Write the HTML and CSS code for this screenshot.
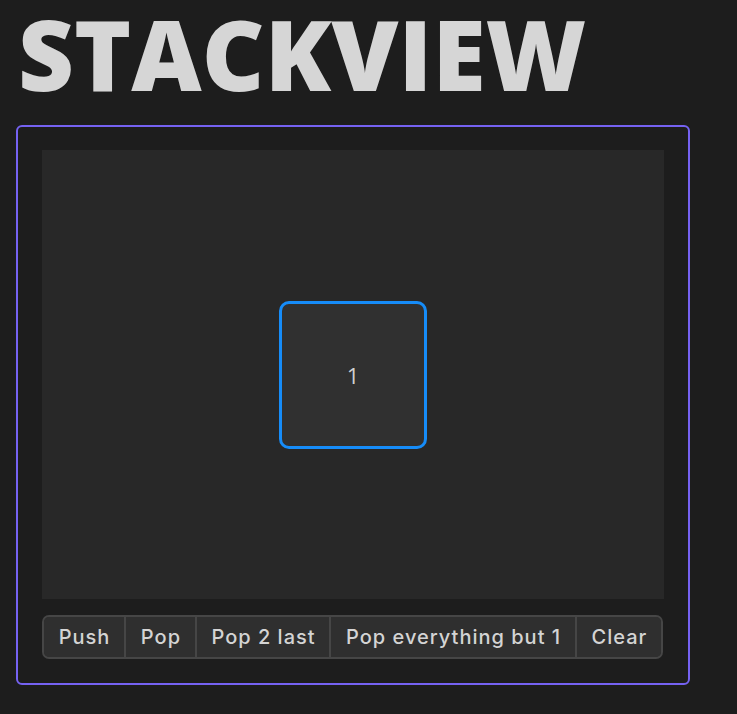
FILE: index.html
```html
<!DOCTYPE html>
<html>
<head>
<meta charset="utf-8">
<link rel="stylesheet" href="styles.css">
</head>
<body>
<h1 class="title">STACKVIEW</h1>
<div class="card">
  <div class="stage">
    <div class="item">1</div>
  </div>
  <div class="btn-group">
    <button class="btn">Push</button>
    <button class="btn">Pop</button>
    <button class="btn">Pop 2 last</button>
    <button class="btn">Pop everything but 1</button>
    <button class="btn">Clear</button>
  </div>
</div>
</body>
</html>
```
FILE: styles.css
```css
html, body {
  background: #1d1d1d;
}
body {
  margin: 0;
  padding: 0 16px;
  font-family: "Inter", "Liberation Sans", sans-serif;
  color: #d4d4d4;
}
.title {
  margin: 0;
  padding-left: 2px;
  font-family: "Open Sans", sans-serif;
  font-weight: 800;
  font-size: 97px;
  line-height: 106px;
  color: #d6d6d6;
  height: 125px;
  white-space: nowrap;
}
.card {
  width: 674px;
  box-sizing: border-box;
  border: 2px solid #7562f2;
  border-radius: 6px;
  padding: 23px 24px 24px 24px;
  display: flex;
  flex-direction: column;
  gap: 16px;
}
.stage {
  height: 449px;
  background: #282828;
  display: flex;
  align-items: center;
  justify-content: center;
}
.item {
  width: 148px;
  height: 148px;
  box-sizing: border-box;
  border: 3px solid #168cf8;
  border-radius: 10px;
  background: #303030;
  display: flex;
  align-items: center;
  justify-content: center;
  font-family: "Open Sans", sans-serif;
  font-size: 22px;
  color: #cfcfcf;
}
.btn-group {
  display: flex;
  margin: 0 1px 0 0;
  height: 44px;
  box-sizing: border-box;
  border: 2px solid #464646;
  border-radius: 7px;
  overflow: hidden;
  background: #2f2f2f;
}
.btn {
  flex: 1 1 auto;
  background: #2f2f2f;
  border: none;
  border-right: 2px solid #464646;
  color: #d4d4d4;
  font-family: "Inter", sans-serif;
  font-weight: 500;
  font-size: 20px;
  letter-spacing: 1px;
  padding: 0 12px 0 13px;
  white-space: nowrap;
}
.btn:last-child {
  border-right: none;
}
```
